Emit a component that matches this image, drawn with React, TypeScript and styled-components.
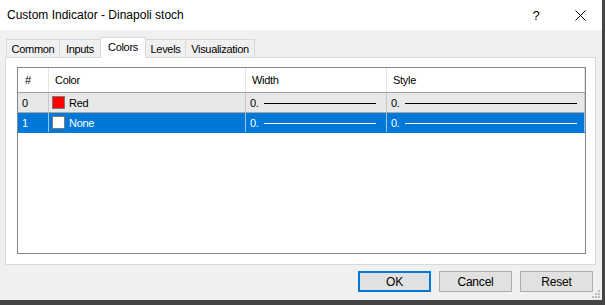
import React from "react";
import styled, { createGlobalStyle } from "styled-components";

const GlobalStyle = createGlobalStyle`
  html, body { margin: 0; padding: 0; }
  body {
    background: #454545;
    font-family: "Liberation Sans", Arial, sans-serif;
    width: 605px;
    height: 305px;
    overflow: hidden;
  }
`;

const Window = styled.div`
  position: relative;
  width: 602px;
  height: 300px;
  background: #f0f0f0;
  display: flex;
  flex-direction: column;
  overflow: hidden;
`;

const TitleBar = styled.div`
  height: 30px;
  background: #ffffff;
  display: flex;
  align-items: center;
  padding-left: 7px;
  flex-shrink: 0;
`;

const Title = styled.div`
  flex: 1;
  font-size: 12px;
  color: #000;
  padding-bottom: 1px;
`;

const CaptionButton = styled.div`
  width: 44px;
  height: 30px;
  display: flex;
  align-items: center;
  justify-content: center;
  font-size: 13px;
  color: #000;
`;

const Body = styled.div`
  flex: 1;
  display: flex;
  flex-direction: column;
  padding: 7px 6px 8px 5px;
`;

const TabStrip = styled.div`
  position: relative;
  z-index: 1;
  height: 21px;
  margin-bottom: -1px;
  padding-left: 1px;
  display: flex;
  align-items: flex-end;
`;

const Tab = styled.div<{ $w: number; $active?: boolean }>`
  box-sizing: border-box;
  width: ${(p) => p.$w}px;
  height: ${(p) => (p.$active ? 21 : 18)}px;
  margin-bottom: ${(p) => (p.$active ? 0 : 1)}px;
  margin-left: -1px;
  &:first-child { margin-left: 0; }
  border: 1px solid #d9d9d9;
  border-bottom: none;
  background: ${(p) => (p.$active ? "#ffffff" : "#f0f0f0")};
  position: relative;
  z-index: ${(p) => (p.$active ? 2 : 1)};
  display: flex;
  align-items: center;
  justify-content: center;
  padding-bottom: ${(p) => (p.$active ? 2 : 0)}px;
  font-size: 11px;
  letter-spacing: -0.3px;
  color: #000;
`;

const Panel = styled.div`
  box-sizing: border-box;
  height: 208px;
  background: #ffffff;
  border: 1px solid #d9d9d9;
  padding: 9px 9px 10px 11px;
  display: flex;
`;

const ListBox = styled.div`
  flex: 1;
  border: 1px solid #828790;
  background: #fff;
  display: flex;
  flex-direction: column;
`;

const COLS = "31px 197px 141px 198px";

const HeaderRow = styled.div`
  display: grid;
  grid-template-columns: ${COLS};
  height: 25px;
  box-sizing: border-box;
  border-bottom: 1px solid #a0a0a0;
`;

const HeaderCell = styled.div`
  border-right: 1px solid #e5e5e5;
  display: flex;
  align-items: center;
  padding-left: 6px;
  font-size: 11px;
  letter-spacing: -0.3px;
  color: #000;
`;

const Row = styled.div<{ $selected?: boolean }>`
  display: grid;
  grid-template-columns: ${COLS};
  height: 20px;
  box-sizing: border-box;
  background: ${(p) => (p.$selected ? "#0078d7" : "#e8e8e8")};
  border-bottom: 1px solid ${(p) => (p.$selected ? "#0078d7" : "#a8a8a8")};
  color: ${(p) => (p.$selected ? "#ffffff" : "#000000")};
`;

const Cell = styled.div<{ $selected?: boolean; $padL?: number; $padR?: number }>`
  border-right: 1px solid ${(p) => (p.$selected ? "#9cc7ec" : "#c8c8c8")};
  display: flex;
  align-items: center;
  padding-left: ${(p) => p.$padL ?? 4}px;
  padding-right: ${(p) => p.$padR ?? 0}px;
  font-size: 11px;
  letter-spacing: -0.3px;
  min-width: 0;
`;

const Swatch = styled.div<{ $color: string }>`
  width: 11px;
  height: 11px;
  border: 1px solid #7a7a7a;
  background: ${(p) => p.$color};
  margin-right: 4px;
  flex-shrink: 0;
`;

const LineSample = styled.div<{ $selected?: boolean }>`
  flex: 1;
  height: 1px;
  margin-left: 5px;
  margin-top: 1px;
  background: ${(p) => (p.$selected ? "#ffffff" : "#000000")};
`;

const ButtonRow = styled.div`
  display: flex;
  justify-content: flex-end;
  gap: 8px;
  margin-top: 6px;
  padding-right: 3px;
`;

const Button = styled.div<{ $default?: boolean }>`
  box-sizing: border-box;
  width: 73px;
  height: 21px;
  background: #e1e1e1;
  border: ${(p) => (p.$default ? "2px solid #0078d7" : "1px solid #adadad")};
  display: flex;
  align-items: center;
  justify-content: center;
  font-size: 12px;
  letter-spacing: -0.2px;
  color: #000;
`;

const Grip = styled.svg`
  position: absolute;
  right: 2px;
  bottom: 2px;
`;

type ColorRow = { idx: string; color: string; name: string };

const rows: ColorRow[] = [
  { idx: "0", color: "#ff0000", name: "Red" },
  { idx: "1", color: "#ffffff", name: "None" },
];

export default function App() {
  const selected = 1;
  return (
    <>
      <GlobalStyle />
      <Window>
        <TitleBar>
          <Title>Custom Indicator - Dinapoli stoch</Title>
          <CaptionButton>?</CaptionButton>
          <CaptionButton>
            <svg width="11" height="11" viewBox="0 0 11 11">
              <path d="M0.5 0.5 L10.5 10.5 M10.5 0.5 L0.5 10.5" stroke="#000" strokeWidth="1" fill="none" />
            </svg>
          </CaptionButton>
        </TitleBar>
        <Body>
          <TabStrip>
            <Tab $w={54}>Common</Tab>
            <Tab $w={42}>Inputs</Tab>
            <Tab $w={46} $active>Colors</Tab>
            <Tab $w={41}>Levels</Tab>
            <Tab $w={70}>Visualization</Tab>
          </TabStrip>
          <Panel>
            <ListBox>
              <HeaderRow>
                <HeaderCell style={{ paddingLeft: 7 }}>#</HeaderCell>
                <HeaderCell>Color</HeaderCell>
                <HeaderCell>Width</HeaderCell>
                <HeaderCell>Style</HeaderCell>
              </HeaderRow>
              {rows.map((r, i) => {
                const sel = i === selected;
                return (
                  <Row key={r.idx} $selected={sel}>
                    <Cell $selected={sel} $padL={4}>{r.idx}</Cell>
                    <Cell $selected={sel} $padL={3}>
                      <Swatch $color={r.color} />
                      {r.name}
                    </Cell>
                    <Cell $selected={sel} $padL={4} $padR={10}>
                      0.
                      <LineSample $selected={sel} />
                    </Cell>
                    <Cell $selected={sel} $padL={4} $padR={7}>
                      0.
                      <LineSample $selected={sel} />
                    </Cell>
                  </Row>
                );
              })}
            </ListBox>
          </Panel>
          <ButtonRow>
            <Button $default>OK</Button>
            <Button>Cancel</Button>
            <Button>Reset</Button>
          </ButtonRow>
        </Body>
        <Grip width="8" height="8" viewBox="0 0 8 8">
          {[
            [6, 0],
            [6, 3],
            [3, 3],
            [6, 6],
            [3, 6],
            [0, 6],
          ].map(([x, y], k) => (
            <rect key={k} x={x} y={y} width="2" height="2" fill="#bdbdbd" />
          ))}
        </Grip>
      </Window>
    </>
  );
}
